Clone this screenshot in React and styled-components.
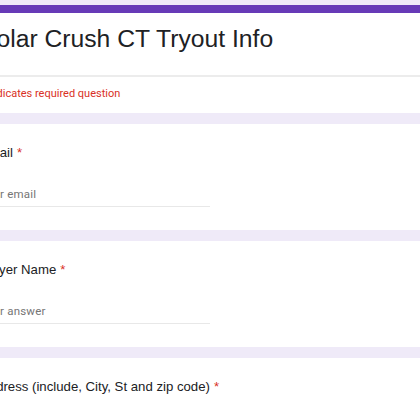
import styled, { createGlobalStyle } from "styled-components";

const GlobalStyle = createGlobalStyle`
  html, body {
    margin: 0;
    padding: 0;
    background: #efeaf8;
    font-family: "Liberation Sans", Arial, sans-serif;
    overflow: hidden;
  }
`;

const Page = styled.div`
  width: 420px;
  height: 420px;
  overflow: hidden;
  background: #efeaf8;
  padding-top: 5px;
  box-sizing: border-box;
`;

const Column = styled.div`
  margin-left: -44px;
  width: 520px;
  display: flex;
  flex-direction: column;
  gap: 11px;
`;

const HeaderCard = styled.div`
  background: #fff;
  border-top: 8px solid #673ab7;
  border-radius: 8px 8px 0 0;
`;

const TitleRow = styled.div`
  padding: 12px 24px 0;
  box-sizing: border-box;
  border-bottom: 2px solid #ececec;
  height: 64px;
`;

const Title = styled.h1`
  margin: 0;
  font-family: "Liberation Sans", Arial, sans-serif;
  font-size: 24.7px;
  font-weight: 400;
  color: #202124;
  line-height: 28px;
`;

const RequiredRow = styled.div`
  padding: 10px 24px 0;
  height: 36px;
  box-sizing: border-box;
  font-family: Roboto, "Liberation Sans", sans-serif;
  font-size: 11px;
  line-height: 14px;
  color: #d93025;
`;

const QuestionCard = styled.div`
  background: #fff;
  height: 106px;
  padding: 20px 24px 0;
  box-sizing: border-box;
`;

const Label = styled.div`
  font-size: 13.2px;
  color: #202124;
  line-height: 18px;
`;

const Star = styled.span`
  color: #d93025;
  margin-left: 4px;
`;

const Field = styled.div`
  margin-top: 25px;
  width: 230px;
  border-bottom: 1px solid #e8e8e8;
  padding-bottom: 5px;
  font-family: Roboto, "Liberation Sans", sans-serif;
  font-size: 11.5px;
  line-height: 14px;
  color: #757575;
  letter-spacing: 0.2px;
`;

const questions = [
  { label: "Email", placeholder: "Your email" },
  { label: "Player Name", placeholder: "Your answer" },
  { label: "Address (include, City, St and zip code)", placeholder: "Your answer" },
];

export default function App() {
  return (
    <Page>
      <GlobalStyle />
      <Column>
        <HeaderCard>
          <TitleRow>
            <Title>Polar Crush CT Tryout Info</Title>
          </TitleRow>
          <RequiredRow>* Indicates required question</RequiredRow>
        </HeaderCard>
        {questions.map((q) => (
          <QuestionCard key={q.label}>
            <Label>
              {q.label}
              <Star>*</Star>
            </Label>
            <Field>{q.placeholder}</Field>
          </QuestionCard>
        ))}
      </Column>
    </Page>
  );
}
